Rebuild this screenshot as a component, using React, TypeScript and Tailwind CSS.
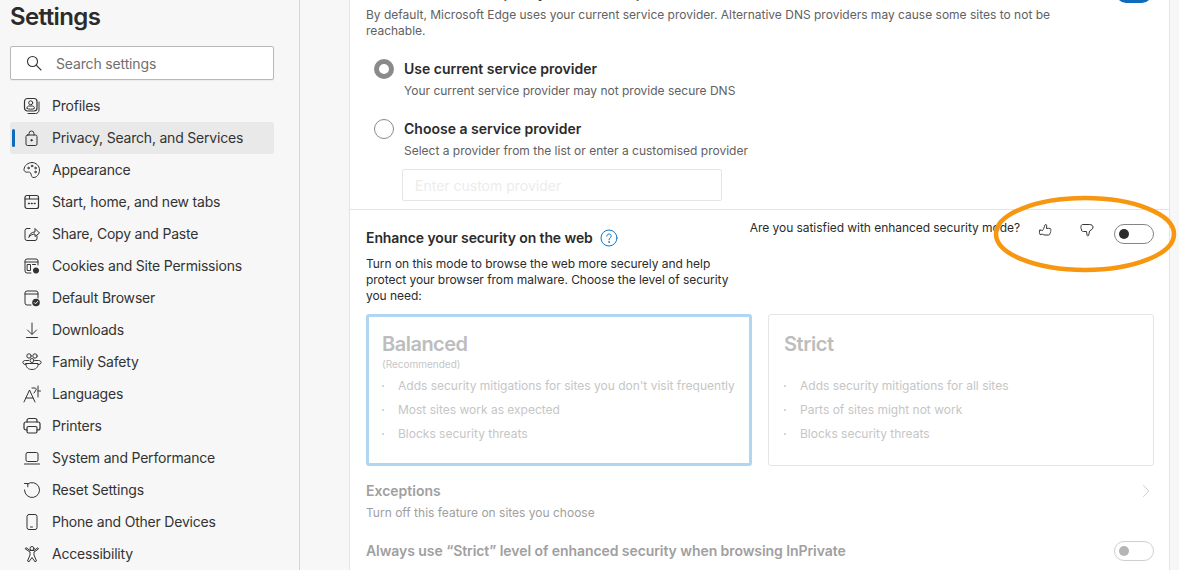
import type { ReactNode } from "react";

const Svg = ({ children }: { children: ReactNode }) => (
  <svg width="20" height="20" viewBox="0 0 20 20" fill="none" stroke="#333" strokeWidth="1" strokeLinecap="round" strokeLinejoin="round">
    {children}
  </svg>
);

const navItems: { label: string; icon: ReactNode; active?: boolean }[] = [
  {
    label: "Profiles",
    icon: (
      <Svg>
        <rect x="2.500" y="2.500" width="12.500" height="12.500" rx="3" strokeWidth="1.200" />
        <circle cx="8.700" cy="6.800" r="2" />
        <path d="M5 12c0-1.200 1-2 2-2h3.400c1 0 2 .8 2 2v.5c-1 1-6.400 1-7.400 0z" />
        <path d="M17 6v8c0 2-1.500 3.500-3.500 3.500H6" />
      </Svg>
    ),
  },
  {
    label: "Privacy, Search, and Services",
    active: true,
    icon: (
      <Svg>
        <rect x="4" y="7" width="11" height="10.500" rx="1.500" />
        <path d="M7 7V5.500a2.500 2.500 0 0 1 5 0V7" />
        <circle cx="9.500" cy="12.200" r=".7" fill="#333" />
      </Svg>
    ),
  },
  {
    label: "Appearance",
    icon: (
      <Svg>
        <path d="M10 2.500c4 0 7.500 3.200 7.500 7.500S14.500 17.500 12 17.500c-2.500 0-2.500-1.500-3-3.500-.5-2-2-2-3.500-1.800C4 12.400 1.800 11.500 2 9.500 2.300 5.500 6 2.500 10 2.500z" />
        <circle cx="6.500" cy="8" r=".8" />
        <circle cx="10" cy="6" r=".8" />
        <circle cx="13.500" cy="8" r=".8" />
        <circle cx="13.500" cy="12" r=".8" />
      </Svg>
    ),
  },
  {
    label: "Start, home, and new tabs",
    icon: (
      <Svg>
        <rect x="3" y="3.500" width="13.500" height="13" rx="2" strokeWidth="1.200" />
        <path d="M3 7h4.500V3.500M7.500 7h9" />
        <path d="M6.500 11.500h.8M9.400 11.500h.8M12.300 11.500h.8" strokeWidth="1.400" />
      </Svg>
    ),
  },
  {
    label: "Share, Copy and Paste",
    icon: (
      <Svg>
        <path d="M8 4.500H5A2 2 0 0 0 3 6.500v8a2 2 0 0 0 2 2h8a2 2 0 0 0 2-2V12" />
        <path d="M7 13c.5-3 2.500-5 6-5V4.500L17.500 9 13 12.500V10c-2.500 0-4.500 1-6 3z" />
      </Svg>
    ),
  },
  {
    label: "Cookies and Site Permissions",
    icon: (
      <Svg>
        <path d="M9 17H5a2 2 0 0 1-2-2V5a2 2 0 0 1 2-2h9a2 2 0 0 1 2 2v4" />
        <path d="M3 6h13" />
        <rect x="5.500" y="8.500" width="3" height="6" />
        <path d="M10.500 8.500h3" />
        <circle cx="14" cy="14.500" r="2.300" fill="#333" strokeWidth="1.600" strokeDasharray="1.200 1" />
      </Svg>
    ),
  },
  {
    label: "Default Browser",
    icon: (
      <Svg>
        <path d="M9 17H5a2 2 0 0 1-2-2V5a2 2 0 0 1 2-2h9a2 2 0 0 1 2 2v5" />
        <path d="M3 6h13" />
        <circle cx="14" cy="14.500" r="3.800" fill="#333" stroke="none" />
        <path d="M12.300 14.600l1.200 1.200 2.200-2.400" stroke="#fff" />
      </Svg>
    ),
  },
  {
    label: "Downloads",
    icon: (
      <Svg>
        <path d="M10 3v11M5.500 10l4.500 4.500 4.500-4.500M4.500 17.500h11" />
      </Svg>
    ),
  },
  {
    label: "Family Safety",
    icon: (
      <Svg>
        <circle cx="7" cy="4" r="2.200" />
        <circle cx="13" cy="4" r="2.200" />
        <circle cx="10" cy="8.500" r="2" />
        <path d="M6.500 8.500H3.500C1.500 8.500.5 9.800 1 11c.4 1 1.300 1.500 2.800 1.500M13.500 8.500h3c2 0 3 1.300 2.500 2.500-.4 1-1.300 1.500-2.800 1.500" />
        <path d="M4 11.500h12v1c0 3-2.500 5-6 5s-6-2-6-5z" />
      </Svg>
    ),
  },
  {
    label: "Languages",
    icon: (
      <Svg>
        <path d="M2 18L7.500 6 13 18M4 14h7" />
        <path d="M10 4h3c1 0 1.500 1 1 2l-2 3M16 2v11M16 7h2.500" />
      </Svg>
    ),
  },
  {
    label: "Printers",
    icon: (
      <Svg>
        <path d="M5 6V4.500A2 2 0 0 1 7 2.500h6a2 2 0 0 1 2 2V6" strokeWidth="1.200" />
        <path d="M5 14H4a2 2 0 0 1-2-2V8a2 2 0 0 1 2-2h12a2 2 0 0 1 2 2v4a2 2 0 0 1-2 2h-1" strokeWidth="1.200" />
        <rect x="5" y="10.500" width="10" height="6.500" rx="1.500" strokeWidth="1.200" />
      </Svg>
    ),
  },
  {
    label: "System and Performance",
    icon: (
      <Svg>
        <rect x="4" y="4.500" width="12" height="9" rx="1.500" />
        <path d="M2.500 16h15" />
      </Svg>
    ),
  },
  {
    label: "Reset Settings",
    icon: (
      <Svg>
        <path d="M5.500 4A7.500 7.500 0 1 1 2.500 10" />
        <path d="M2.500 3.500h3.300V6.800" />
      </Svg>
    ),
  },
  {
    label: "Phone and Other Devices",
    icon: (
      <Svg>
        <rect x="5" y="2.500" width="10" height="15" rx="2" />
        <path d="M8.500 15h2" />
      </Svg>
    ),
  },
  {
    label: "Accessibility",
    icon: (
      <Svg>
        <circle cx="10" cy="4.500" r="2" />
        <path d="M3.500 5l4.500 3v3l-2.500 6 1.500.8L10 13.500l3 4.300 1.500-.8-2.500-6V8l4.500-3-.8-1.200L12 6.500H8L4.300 3.800z" />
      </Svg>
    ),
  },
];

const Bullet = ({ children }: { children: ReactNode }) => (
  <li className="flex h-6 items-center whitespace-nowrap">
    <span className="mr-[14px] h-[2px] w-[2px] rounded-full bg-[#c8c8c8]" />
    {children}
  </li>
);

const Toggle = ({ disabled }: { disabled?: boolean }) => (
  <div
    className={`flex h-5 w-10 shrink-0 items-center rounded-full border pl-[4px] ${
      disabled ? "border-[#cfcfcf]" : "border-[#858585]"
    }`}
  >
    <span className={`h-[10px] w-[10px] rounded-full ${disabled ? "bg-[#b5b5b5]" : "bg-[#2b2b2b]"}`} />
  </div>
);

export default function App() {
  return (
    <div className="relative flex h-[570px] w-[1179px] overflow-hidden bg-[#f7f7f7] font-['Inter',sans-serif] text-[#2b2b2b]">
      {/* sidebar */}
      <aside className="flex w-[300px] shrink-0 flex-col border-r border-[#d6d6d6] pl-[10px] pr-[25px]">
        <h1 className="mt-[1px] text-[24px] leading-[32px] font-semibold tracking-[-0.6px]">Settings</h1>
        <div className="mt-[13px] flex h-[34px] items-center rounded-[2px] border border-[#b8b8b8] bg-white pl-[15px] shadow-[0_1px_1px_rgba(0,0,0,0.05)]">
          <svg width="16" height="16" viewBox="0 0 16 16" fill="none" stroke="#333" strokeWidth="1.100" strokeLinecap="round">
            <circle cx="6.500" cy="6.500" r="5" />
            <path d="M10.200 10.200L15 15" />
          </svg>
          <span className="ml-[14px] text-[14px] tracking-[-0.15px] text-[#6f6f6f]">Search settings</span>
        </div>
        <nav className="mt-[10px] flex flex-col">
          {navItems.map((item) => (
            <div
              key={item.label}
              className={`relative flex h-8 shrink-0 items-center rounded-[2px] pl-[12px] text-[14px] tracking-[-0.2px] text-[#333] ${
                item.active ? "bg-[#e9e9e9]" : ""
              }`}
            >
              {item.active && <span className="absolute left-[2px] top-[7px] h-[18px] w-[3px] rounded-full bg-[#0f6cbd]" />}
              {item.icon}
              <span className="mb-[2px] ml-[10px]">{item.label}</span>
            </div>
          ))}
        </nav>
      </aside>

      {/* main */}
      <main className="ml-[49px] w-[821px] shrink-0 border-x border-[#e5e5e5] bg-white text-[12px] leading-4">
        <div className="relative -mt-[17px] pl-[16px] pr-[15px]">
          <div className="flex h-5 items-center justify-between pr-[2px]">
            <p className="text-[14px] font-semibold">Use secure DNS to specify how to lookup the network address for websites</p>
            <span className="h-5 w-9 rounded-full bg-[#0f6cbd]" />
          </div>
          <p className="mt-[4px] max-w-[700px] text-[#616161]">
            By default, Microsoft Edge uses your current service provider. Alternative DNS providers may cause some sites to not be reachable.
          </p>
          <div className="mt-[20px] flex h-5 items-center pl-[8px]">
            <span className="h-5 w-5 rounded-full border-[5px] border-[#8a8a8a]" />
            <span className="ml-[10px] text-[14px] font-semibold">Use current service provider</span>
          </div>
          <p className="mt-[4px] pl-[38px] text-[#616161]">Your current service provider may not provide secure DNS</p>
          <div className="mt-[20px] flex h-5 items-center pl-[8px]">
            <span className="h-5 w-5 rounded-full border border-[#8a8a8a]" />
            <span className="ml-[10px] text-[14px] font-semibold">Choose a service provider</span>
          </div>
          <p className="mt-[4px] pl-[38px] text-[#616161]">Select a provider from the list or enter a customised provider</p>
          <div className="ml-[36px] mt-[10px] flex h-8 w-[320px] items-center rounded-[2px] border border-[#e5e5e5] pl-[12px] pt-[1px] text-[14px] text-[#ececec]">
            Enter custom provider
          </div>
        </div>
        <div className="mt-[8px] border-t border-[#e5e5e5] pl-[16px] pr-[15px]">
          <div className="flex items-start justify-between">
            <div className="mt-[18px] flex h-5 items-center">
              <span className="text-[14px] font-semibold tracking-[-0.1px]">Enhance your security on the web</span>
              <svg className="ml-[7px]" width="18" height="18" viewBox="0 0 18 18" fill="none" stroke="#1277c9" strokeWidth="1" strokeLinecap="round">
                <circle cx="9" cy="9" r="8" />
                <path d="M6.800 7.200c0-1.300 1-2.200 2.200-2.200s2.200.9 2.200 2.100c0 1.800-2.200 1.800-2.200 3.700" />
                <circle cx="9" cy="13" r=".4" />
              </svg>
            </div>
            <div className="mt-[14px] flex items-start">
              <span className="mt-[-4px] whitespace-nowrap tracking-[-0.05px]">Are you satisfied with enhanced security mode?</span>
              <svg className="ml-[17px] mt-[-3px] shrink-0" width="18" height="18" viewBox="0 0 18 18" fill="none" stroke="#333" strokeWidth="1" strokeLinejoin="round">
                <path d="M3 9.500c.8-.8 2 .2 2.500 0 1-1 1.500-3 2.500-5.500.4-1 1.800-.6 1.700.8L9.500 7.500c1 0 2.800-.4 3.600-.1.900.3.900 1.400.4 1.800.6.500.5 1.500-.1 1.800.3.700 0 1.400-.6 1.600.1.700-.4 1.400-1.200 1.400H8c-1.500 0-2.200-.8-3-.8l-2 .3c-.6-.7-1-3.100 0-4.800z" />
              </svg>
              <svg className="ml-[23px] mt-[-3px] shrink-0" width="18" height="18" viewBox="0 0 18 18" fill="none" stroke="#333" strokeWidth="1" strokeLinejoin="round">
                <path d="M3 5.500C3 4 4 3.500 5 3.500h6.500c2 0 3.500 1 3.500 2.500 0 1.500-1 2.500-2 3-1 .4-1.500 1-1.700 2-.2 1.200-.3 2.500-.8 3.500-.4.700-1.200.5-1.400-.2L8.500 10.500H5.500C4 10.500 3 9.500 3.500 8 2.800 7.500 2.800 6.200 3 5.500z" />
              </svg>
              <div className="ml-[18px]">
                <Toggle />
              </div>
            </div>
          </div>
          <p className="mt-[8px] w-[380px] tracking-[-0.05px] text-[#2b2b2b]">
            Turn on this mode to browse the web more securely and help protect your browser from malware. Choose the level of security you need:
          </p>
          <div className="mt-[10px] flex gap-4">
            <div className="h-[152px] w-[386px] rounded-[3px] border-[3px] border-[#b0d6f2] px-[13px] pt-[14px] text-[#c6c6c6]">
              <h2 className="text-[20px] leading-[26px] font-semibold tracking-[-0.5px] text-[#bdbdbd]">Balanced</h2>
              <p className="text-[10px] leading-[14px]">(Recommended)</p>
              <ul className="mt-[3px]">
                <Bullet>Adds security mitigations for sites you don't visit frequently</Bullet>
                <Bullet>Most sites work as expected</Bullet>
                <Bullet>Blocks security threats</Bullet>
              </ul>
            </div>
            <div className="h-[152px] w-[386px] rounded-[3px] border border-[#e5e5e5] px-[15px] pt-[16px] text-[#c6c6c6]">
              <h2 className="text-[20px] leading-[26px] font-semibold tracking-[-0.4px] text-[#bdbdbd]">Strict</h2>
              <ul className="mt-[17px]">
                <Bullet>Adds security mitigations for all sites</Bullet>
                <Bullet>Parts of sites might not work</Bullet>
                <Bullet>Blocks security threats</Bullet>
              </ul>
            </div>
          </div>
          <div className="mt-[15px] flex items-center justify-between pr-[1px]">
            <h3 className="text-[14px] leading-5 font-semibold text-[#a0a0a0]">Exceptions</h3>
            <svg width="14" height="14" viewBox="0 0 14 14" fill="none" stroke="#d0d0d0" strokeWidth="1" strokeLinecap="round">
              <path d="M4.500 1.500L10 7l-5.500 5.500" />
            </svg>
          </div>
          <p className="mt-[4px] text-[#a0a0a0]">Turn off this feature on sites you choose</p>
          <div className="mt-[20px] flex items-center justify-between">
            <span className="text-[14px] font-semibold tracking-[-0.07px] text-[#a0a0a0]">Always use “Strict” level of enhanced security when browsing InPrivate</span>
            <Toggle disabled />
          </div>
        </div>
      </main>

      {/* annotation circled on the screenshot */}
      <svg className="pointer-events-none absolute left-[990px] top-[190px]" width="189" height="88" viewBox="0 0 189 88" fill="none">
        <ellipse cx="95" cy="44" rx="89" ry="36" stroke="#f7960f" strokeWidth="4.500" />
      </svg>
    </div>
  );
}
